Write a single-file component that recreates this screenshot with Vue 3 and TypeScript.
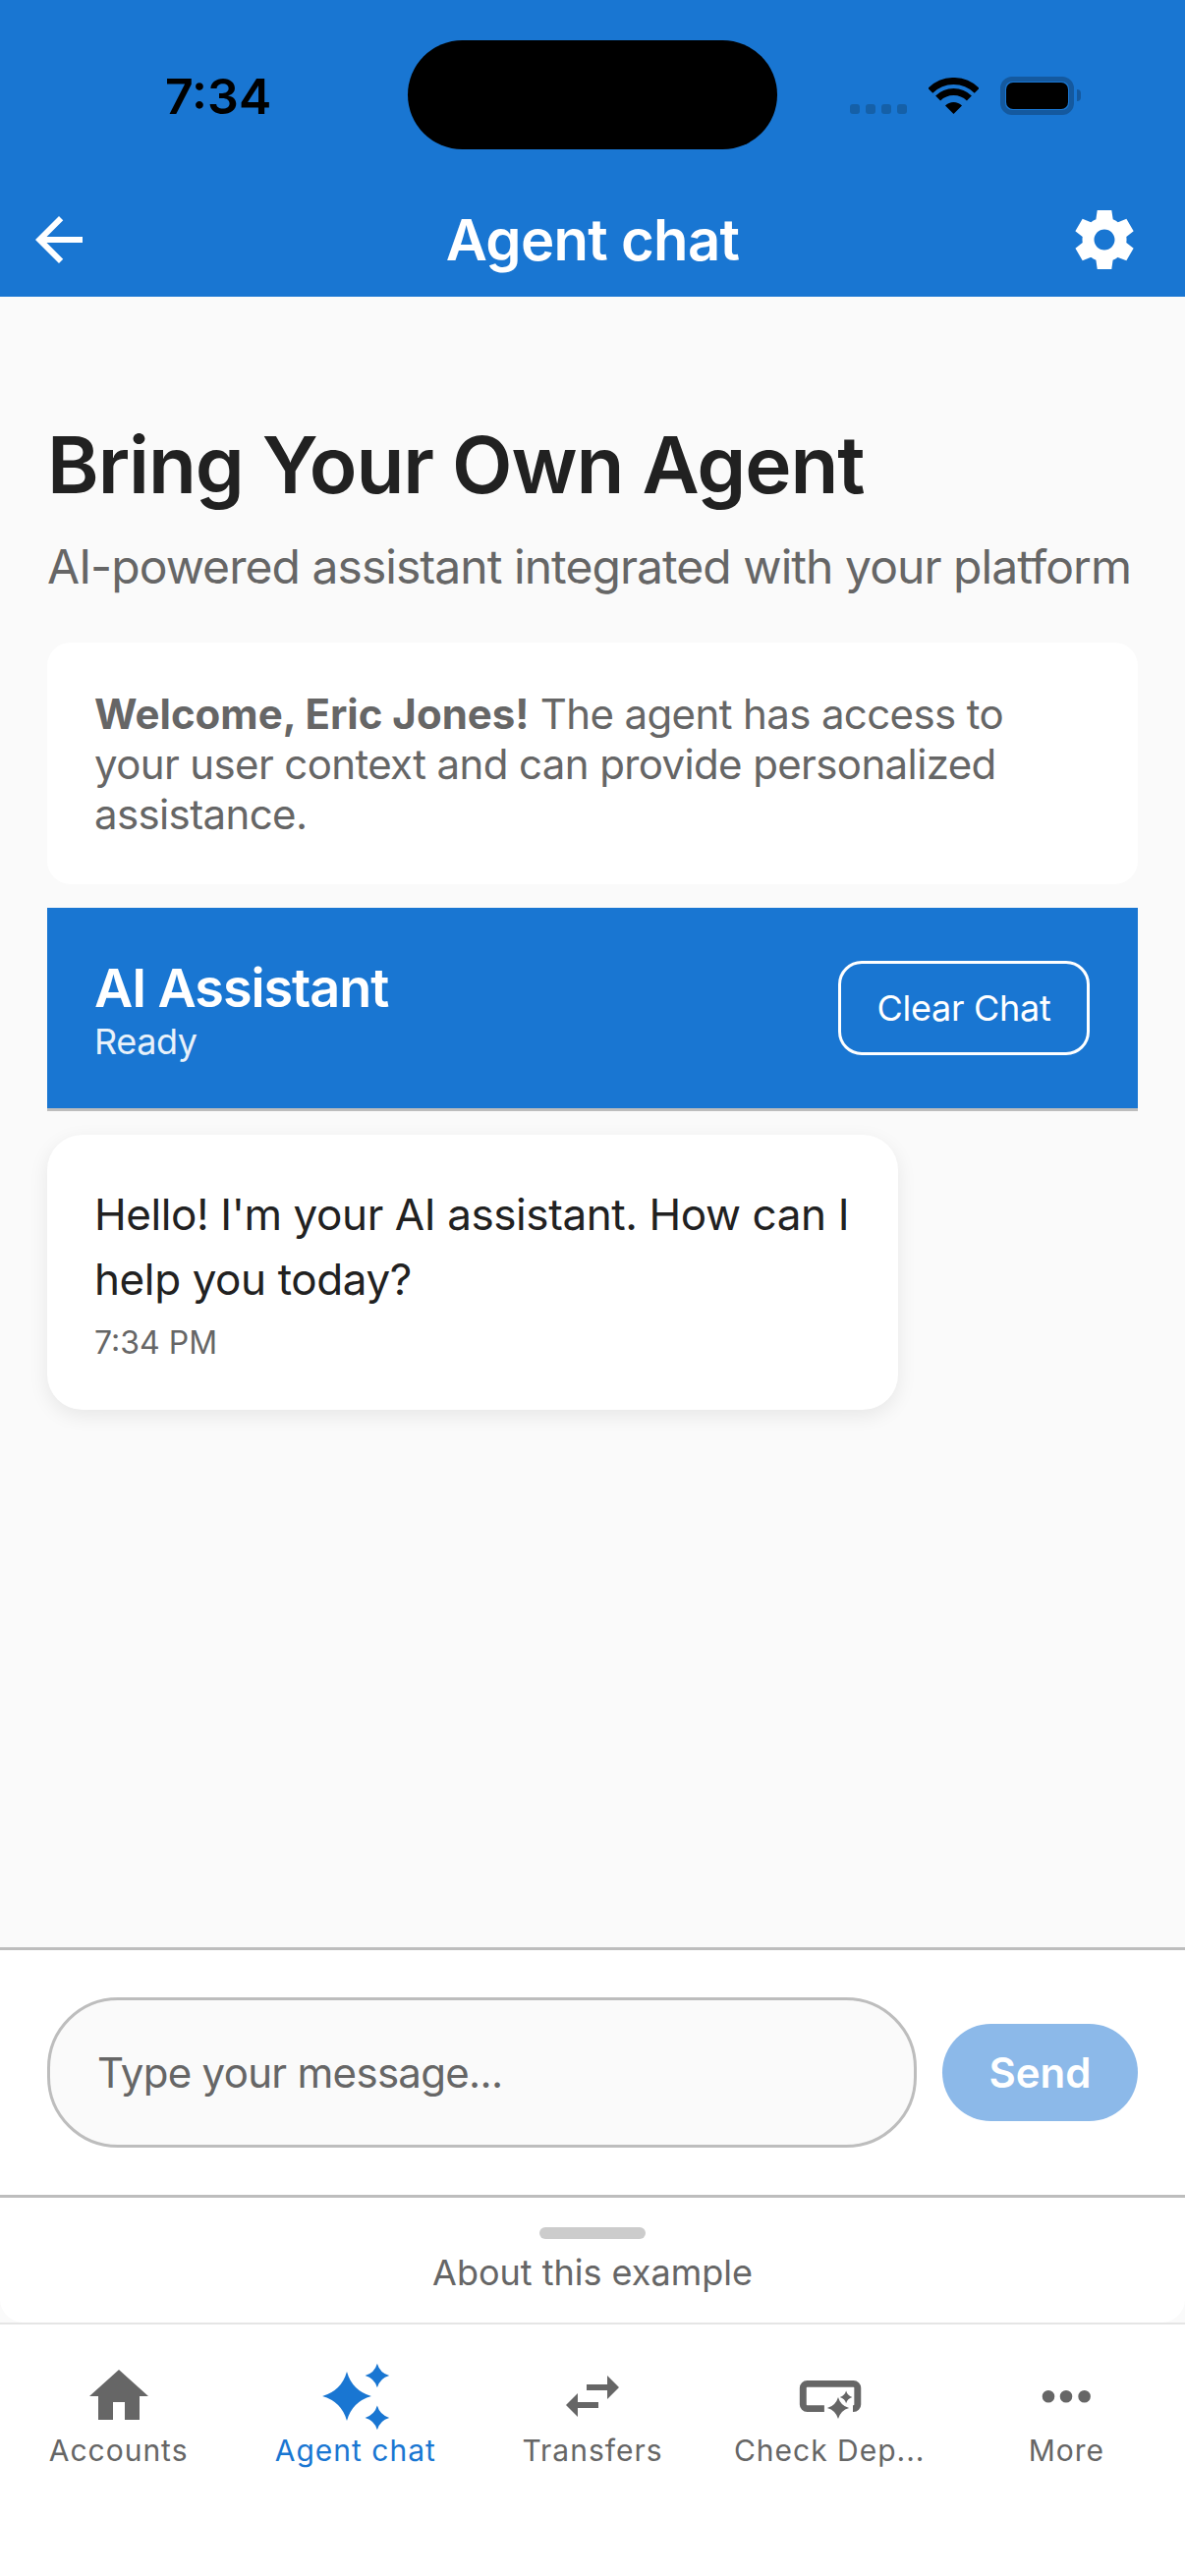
<template>
  <div class="screen">
    <header class="app-head">
      <div class="status">
        <span class="clock">7:34</span>
        <div class="island"></div>
        <div class="status-icons">
          <div class="signal"><i></i><i></i><i></i><i></i></div>
          <svg class="wifi" width="51" height="37" viewBox="0 0 51 37">
            <path d="M1.8 13.3A33.5 33.5 0 0 1 49.2 13.3M9.6 21.1A22.5 22.5 0 0 1 41.4 21.1" fill="none" stroke="#000" stroke-width="7" />
            <path d="M25.5 37L17 28.5A12 12 0 0 1 34 28.5Z" fill="#000" />
          </svg>
          <div class="battery"><div class="charge"></div></div>
          <div class="battery-cap"></div>
        </div>
      </div>
      <div class="toolbar">
        <svg class="back" width="72" height="72" viewBox="0 0 24 24">
          <path d="M20 11H7.83l5.59-5.59L12 4l-8 8 8 8 1.41-1.41L7.83 13H20v-2z" fill="#fff" />
        </svg>
        <div class="head-title">Agent chat</div>
        <svg class="gear" width="72" height="72" viewBox="0 0 24 24">
          <path d="M19.44 12.99l-.01.02c.04-.33.08-.67.08-1.01 0-.34-.03-.66-.07-.99l.01.02 2.44-1.92-2.43-4.22-2.87 1.16.01.01c-.52-.4-1.09-.74-1.71-1h.01L14.44 2H9.57l-.44 3.07h.01c-.62.26-1.19.6-1.71 1l.01-.01-2.88-1.17-2.44 4.22 2.44 1.92.01-.02c-.04.33-.07.65-.07.99 0 .34.03.68.08 1.01l-.01-.02-2.1 1.65-.33.26 2.43 4.2 2.88-1.15-.02-.04c.53.41 1.1.75 1.73 1.01h-.03L9.58 22h4.85s.03-.18.06-.42l.38-2.65h-.01c.62-.26 1.2-.6 1.73-1.01l-.02.04 2.88 1.15 2.43-4.2s-.14-.12-.33-.26l-2.11-1.66zM12 15.5c-1.93 0-3.5-1.57-3.5-3.5s1.57-3.5 3.5-3.5 3.5 1.57 3.5 3.5-1.57 3.5-3.5 3.5z" fill="#fff" />
        </svg>
      </div>
    </header>

    <main class="content">
      <h1 class="page-title">Bring Your Own Agent</h1>
      <p class="page-sub">AI-powered assistant integrated with your platform</p>
      <div class="welcome">
        <strong>Welcome, Eric Jones!</strong> The agent has access to your user context and can provide personalized assistance.
      </div>
      <div class="chat-head">
        <div class="chat-info">
          <div class="chat-name">AI Assistant</div>
          <div class="chat-state">Ready</div>
        </div>
        <button class="clear-btn">Clear Chat</button>
      </div>
      <div class="bubble">
        <div class="bubble-text">Hello! I'm your AI assistant. How can I help you today?</div>
        <div class="bubble-time">7:34 PM</div>
      </div>
    </main>

    <div class="composer">
      <input class="msg-input" placeholder="Type your message..." />
      <button class="send-btn">Send</button>
    </div>

    <div class="sheet">
      <div class="handle"></div>
      <div class="sheet-label">About this example</div>
    </div>

    <nav class="tabs">
      <div v-for="tab in tabs" :key="tab.label" class="tab" :class="{ active: tab.active }">
        <svg width="72" height="72" viewBox="0 0 24 24">
          <path v-if="tab.stroke" :d="tab.stroke" fill="none" stroke="currentColor" stroke-width="2.3" />
          <path :d="tab.d" fill="currentColor" />
        </svg>
        <span class="tab-label">{{ tab.label }}</span>
      </div>
    </nav>
  </div>
</template>

<script setup lang="ts">
type Tab = { label: string; d: string; stroke?: string; active?: boolean }

// four pointed sparkle with slightly concave sides
function star(cx: number, cy: number, r: number): string {
  const k = r * 0.22
  return (
    `M${cx} ${cy - r}Q${cx + k} ${cy - k} ${cx + r} ${cy}` +
    `Q${cx + k} ${cy + k} ${cx} ${cy + r}` +
    `Q${cx - k} ${cy + k} ${cx - r} ${cy}` +
    `Q${cx - k} ${cy - k} ${cx} ${cy - r}Z`
  )
}

const tabs: Tab[] = [
  { label: 'Accounts', d: 'M10 20v-6h4v6h5v-8h3L12 3 2 12h3v8z' },
  {
    label: 'Agent chat',
    active: true,
    d: star(9, 12, 8.3) + star(19.3, 5, 4.1) + star(19.3, 19.3, 4.1),
  },
  {
    label: 'Transfers',
    d: 'M6.99 11L3 15l3.99 4v-3H14v-2H6.99v-3zM21 9l-3.99-4v3H10v2h7.01v3L21 9z',
  },
  {
    label: 'Check Dep...',
    stroke: 'M10.3 16.2H4.5a1.4 1.4 0 0 1-1.4-1.4V9.2a1.4 1.4 0 0 1 1.4-1.4h15.7a1.4 1.4 0 0 1 1.4 1.4v5.6a1.4 1.4 0 0 1-1.4 1.4H20',
    d: star(15, 16, 3.7) + star(17.7, 12.3, 2.1),
  },
  {
    label: 'More',
    d: 'M6 10a2.1 2.1 0 1 0 0 4.200a2.1 2.1 0 0 0 0-4.200zM12 10a2.1 2.1 0 1 0 0 4.200a2.1 2.1 0 0 0 0-4.200zM18.200 10a2.1 2.1 0 1 0 0 4.200a2.1 2.1 0 0 0 0-4.200z',
  },
]
</script>

<style>
html, body { background: #fff; }
</style>

<style scoped>
.screen {
  width: 1206px;
  height: 2622px;
  display: flex;
  flex-direction: column;
  background: #fafafa;
  font-family: Inter, "Liberation Sans", sans-serif;
  overflow: hidden;
}
.app-head {
  background: #1976d2;
  color: #fff;
}
.status {
  position: relative;
  height: 208px;
  box-sizing: border-box;
  padding: 68px 106px 0 168px;
  display: flex;
  justify-content: space-between;
  align-items: flex-start;
}
.clock {
  color: #000;
  font-size: 50px;
  font-weight: 600;
  line-height: 60px;
}
.island {
  position: absolute;
  left: 415px;
  top: 41px;
  width: 376px;
  height: 111px;
  border-radius: 56px;
  background: #000;
}
.status-icons {
  display: flex;
  align-items: flex-start;
  padding-top: 10px;
}
.signal {
  display: flex;
  gap: 6px;
  margin-top: 28px;
  margin-right: 22px;
}
.signal i {
  width: 10px;
  height: 10px;
  border-radius: 3px;
  background: #1560a8;
}
.wifi {
  margin-top: 1px;
  margin-right: 22px;
}
.battery {
  width: 75px;
  height: 39px;
  box-sizing: border-box;
  border: 5px solid #14599f;
  border-radius: 12px;
  padding: 1px;
}
.charge {
  height: 100%;
  background: #000;
  border-radius: 7px;
}
.battery-cap {
  width: 4px;
  height: 12px;
  margin: 13px 0 0 3px;
  background: #14599f;
  border-radius: 0 4px 4px 0;
}
.toolbar {
  height: 94px;
  box-sizing: border-box;
  padding: 0 24px 22px;
  display: grid;
  grid-template-columns: 1fr auto 1fr;
  align-items: center;
}
.gear {
  justify-self: end;
  margin-right: 22px;
}
.head-title {
  font-size: 58px;
  font-weight: 600;
  line-height: 72px;
  letter-spacing: -0.7px;
}
.content {
  flex: 1;
  padding: 123px 48px 0;
}
.page-title {
  margin: 0;
  font-size: 80px;
  line-height: 96px;
  font-weight: 600;
  letter-spacing: -1.1px;
  color: #212121;
}
.page-sub {
  margin: 26px 0 0;
  font-size: 48px;
  line-height: 60px;
  letter-spacing: -0.95px;
  color: #666;
}
.welcome {
  margin-top: 47px;
  padding: 47px 80px 46px 48px;
  background: #fff;
  border-radius: 24px;
  font-size: 42px;
  line-height: 51px;
  letter-spacing: -0.62px;
  color: #666;
}
.welcome strong {
  font-weight: 700;
  letter-spacing: 0;
}
.chat-head {
  margin-top: 24px;
  height: 207px;
  box-sizing: border-box;
  padding: 0 49px 0 48px;
  display: flex;
  align-items: center;
  justify-content: space-between;
  background: #1976d2;
  border-bottom: 3px solid #bdbdbd;
  color: #fff;
}
.chat-info { padding-top: 3px; }
.chat-name {
  font-size: 54px;
  line-height: 64px;
  font-weight: 600;
  letter-spacing: -1.1px;
}
.chat-state {
  font-size: 36px;
  line-height: 44px;
  letter-spacing: -0.4px;
  opacity: 0.9;
}
.clear-btn {
  width: 256px;
  height: 96px;
  background: transparent;
  border: 3px solid #fff;
  border-radius: 24px;
  color: #fff;
  font: 400 36px Inter, sans-serif;
  letter-spacing: -0.3px;
}
.bubble {
  margin-top: 24px;
  width: 866px;
  height: 280px;
  box-sizing: border-box;
  padding: 48px;
  background: #fff;
  border-radius: 36px;
  box-shadow: 0 6px 20px rgba(0, 0, 0, 0.08);
}
.bubble-text {
  font-size: 44px;
  line-height: 66px;
  letter-spacing: -0.4px;
  color: #212121;
}
.bubble-time {
  margin-top: 12px;
  font-size: 32px;
  line-height: 40px;
  color: #666;
}
.composer {
  height: 255px;
  box-sizing: border-box;
  padding: 0 48px;
  display: flex;
  align-items: center;
  gap: 26px;
  background: #fff;
  border-top: 3px solid #bdbdbd;
  border-bottom: 3px solid #bdbdbd;
}
.msg-input {
  width: 885px;
  height: 153px;
  box-sizing: border-box;
  padding: 0 48px;
  border: 3px solid #bdbdbd;
  border-radius: 72px;
  background: #fafafa;
  font: 400 42px Inter, sans-serif;
  letter-spacing: -0.7px;
  outline: none;
}
.msg-input::placeholder { color: #666; opacity: 1; }
.send-btn {
  width: 199px;
  height: 99px;
  border: 0;
  border-radius: 50px;
  background: #8cb9e9;
  color: #fff;
  font: 600 42px Inter, sans-serif;
}
.sheet {
  height: 127px;
  box-sizing: border-box;
  padding-top: 30px;
  display: flex;
  flex-direction: column;
  align-items: center;
  background: #fff;
  border-radius: 0 0 24px 24px;
}
.handle {
  width: 108px;
  height: 12px;
  border-radius: 6px;
  background: #ccc;
}
.sheet-label {
  margin-top: 12px;
  font-size: 36px;
  line-height: 44px;
  color: #666;
}
.tabs {
  flex: none;
  height: 258px;
  box-sizing: border-box;
  padding-top: 37px;
  display: grid;
  grid-template-columns: repeat(5, 1fr);
  background: #fff;
  border-top: 2px solid #e5e5e5;
}
.tab {
  display: flex;
  flex-direction: column;
  align-items: center;
  color: #666;
}
.tab.active { color: #1976d2; }
.tab-label {
  margin-top: -1px;
  font-size: 30px;
  line-height: 40px;
  letter-spacing: 1px;
  white-space: nowrap;
}
</style>
